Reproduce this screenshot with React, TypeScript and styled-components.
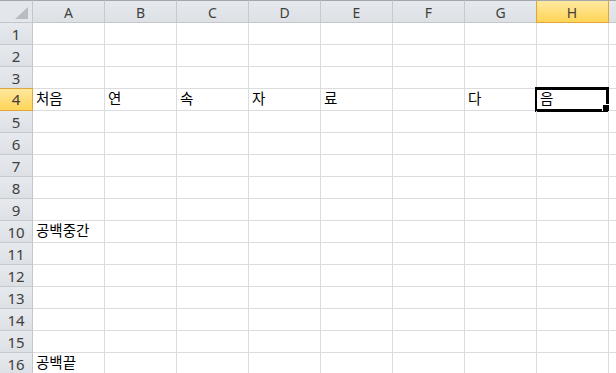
import React from 'react';
import styled, {createGlobalStyle, css} from 'styled-components';

const GlobalStyle = createGlobalStyle`
  html, body {
    margin: 0;
    padding: 0;
    background: #fff;
    overflow: hidden;
  }
`;

const COLS = ['A', 'B', 'C', 'D', 'E', 'F', 'G', 'H', 'I'];
const ROW_COUNT = 16;

// 셀 데이터 (행 -> 열 -> 값)
const data: Record<number, Record<string, string>> = {
  4: {A: '처음', B: '연', C: '속', D: '자', E: '료', G: '다', H: '음'},
  10: {A: '공백중간'},
  16: {A: '공백끝'},
};

const activeCol = 'H';
const activeRow = 4;

const Sheet = styled.div`
  display: grid;
  grid-template-columns: 33px repeat(${COLS.length}, 72px);
  grid-template-rows: 23px;
  grid-auto-rows: 22px;
  width: 616px;
  height: 373px;
  overflow: hidden;
  font-family: "Noto Sans CJK KR", "Noto Sans", sans-serif;
`;

const Corner = styled.div`
  position: relative;
  box-sizing: border-box;
  background: #e3e6ea;
  border-top: 1px solid #a3a6aa;
  border-right: 1px solid #c3c7cc;
  border-bottom: 1px solid #c3c7cc;

  svg {
    position: absolute;
    right: 4px;
    bottom: 3px;
  }
`;

const headerBg = css`
  background: linear-gradient(#e6e9ed, #dde1e6);
`;

const activeBg = css`
  background: linear-gradient(#ffe9a0, #ffd558);
`;

const ColHeader = styled.div<{$active: boolean}>`
  box-sizing: border-box;
  display: flex;
  align-items: center;
  justify-content: center;
  border-top: 1px solid #a3a6aa;
  border-right: 1px solid ${p => (p.$active ? '#e1a53a' : '#c6cacf')};
  border-bottom: 1px solid ${p => (p.$active ? '#e1a53a' : '#c3c7cc')};
  ${p => (p.$active ? css`
    ${activeBg};
    box-shadow: inset 1px 0 0 #e1a53a;
    margin-left: -1px;
  ` : headerBg)};
  font-family: "Noto Sans", sans-serif;
  font-size: 14px;
  color: #3f3f3f;
  padding-top: 1px;
`;

const RowHeader = styled.div<{$active: boolean}>`
  box-sizing: border-box;
  display: flex;
  align-items: center;
  justify-content: center;
  border-right: 1px solid ${p => (p.$active ? '#e1a53a' : '#c3c7cc')};
  border-bottom: 1px solid ${p => (p.$active ? '#e1a53a' : '#c6cacf')};
  ${p => (p.$active ? css`
    ${activeBg};
    box-shadow: inset 0 1px 0 #e1a53a;
    margin-top: -1px;
  ` : headerBg)};
  font-family: "Noto Sans", sans-serif;
  font-size: 15px;
  color: #3f3f3f;
`;

const Cell = styled.div`
  position: relative;
  box-sizing: border-box;
  display: flex;
  align-items: center;
  padding: 0 3px 2px;
  border-right: 1px solid #dadcdd;
  border-bottom: 1px solid #dadcdd;
  font-size: 14.5px;
  line-height: 1;
  color: #000;
  white-space: nowrap;
`;

const Selection = styled.div`
  position: absolute;
  left: -2px;
  top: -2px;
  width: 74px;
  height: 25px;
  box-sizing: border-box;
  border: 3px solid #000;
  border-left-width: 2px;
  pointer-events: none;
`;

const FillHandle = styled.div`
  position: absolute;
  right: -3px;
  bottom: -2px;
  width: 7px;
  height: 7px;
  box-sizing: border-box;
  background: #000;
  border-top: 1px solid #fff;
  border-left: 1px solid #fff;
`;

export default function App() {
  const rows = Array.from({length: ROW_COUNT}, (_, i) => i + 1);

  return (
    <>
      <GlobalStyle/>
      <Sheet>
        <Corner>
          <svg width="13" height="12" viewBox="0 0 13 12">
            <polygon points="13,0 13,12 0,12" fill="#b9bdc3"/>
          </svg>
        </Corner>
        {COLS.map((c, i) => (
          // 마지막 열은 화면 밖으로 잘려서 글자가 보이지 않음
          <ColHeader key={c} $active={c === activeCol}>{i < COLS.length - 1 ? c : ''}</ColHeader>
        ))}
        {rows.map(r => (
          <React.Fragment key={r}>
            <RowHeader $active={r === activeRow}>{r}</RowHeader>
            {COLS.map(c => (
              <Cell key={c}>
                {data[r]?.[c] ?? ''}
                {r === activeRow && c === activeCol && (
                  <Selection>
                    <FillHandle/>
                  </Selection>
                )}
              </Cell>
            ))}
          </React.Fragment>
        ))}
      </Sheet>
    </>
  );
}
